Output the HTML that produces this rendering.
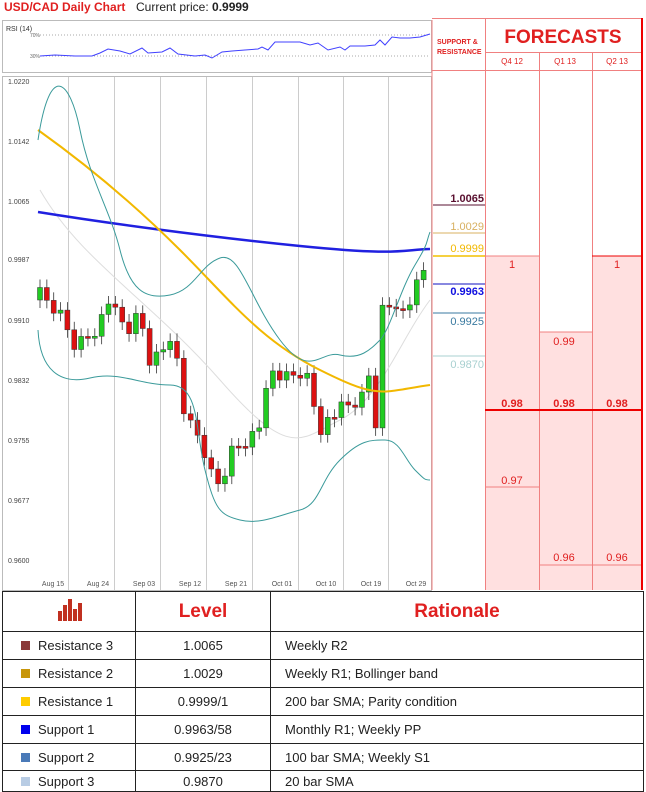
<!DOCTYPE html>
<html><head><meta charset="utf-8"><style>
*{margin:0;padding:0;box-sizing:border-box}
body{width:646px;height:791px;background:#fff;font-family:"Liberation Sans",sans-serif;position:relative;overflow:hidden}
.a{position:absolute;white-space:nowrap}
table{border-collapse:collapse;position:absolute;left:2px;top:591px;width:642px}
td{border:1px solid #222;font-size:13px;color:#222;white-space:nowrap}
</style></head><body>
<svg class="a" style="left:0;top:0" width="646" height="591" id="s">
<rect x="2.5" y="20.5" width="429" height="52" fill="#fff" stroke="#bbb"/>
<text x="6" y="31" font-size="7" fill="#333">RSI (14)</text>
<text x="30" y="37" font-size="5" fill="#666">70%</text><text x="30" y="58" font-size="5" fill="#666">30%</text>
<line x1="40" y1="35" x2="430" y2="35" stroke="#555" stroke-dasharray="1,2" stroke-width=".6"/>
<line x1="40" y1="56" x2="430" y2="56" stroke="#555" stroke-dasharray="1,2" stroke-width=".6"/>
<polyline fill="none" stroke="#4040ff" stroke-width="1" points="40,56 55,55 75,56 92,56 100,53 108,49 120,51 130,54 142,48 148,53 162,52 170,48 178,54 195,56 205,55 212,58 222,52 232,51 245,50 258,49 262,47 268,50 275,42 300,42 310,45 318,43 328,50 340,47 345,50 350,46 365,46 375,45 380,40 385,45 392,37 400,38 410,38 420,37 430,34"/>
<g id="grid"></g>
<g font-size="8" fill="#555" id="pl"></g>
<path d="M40,190 C80,260 150,300 220,380 S300,440 340,420 S400,340 430,300" fill="none" stroke="#ddd" stroke-width="1"/>
<g id="c"></g>
<path d="M38,212 C100,222 200,236 300,246 S400,250 430,249" fill="none" stroke="#2020e0" stroke-width="2.5"/>
<path d="M38,130 C80,160 130,200 180,250 S260,340 320,370 S380,392 430,385" fill="none" stroke="#f2b800" stroke-width="2"/>
<path d="M38,140 C50,60 70,80 80,130 S110,210 120,250 S145,300 170,295 S200,265 220,258 S250,300 280,340 S320,350 340,355 S370,350 380,340 S400,290 415,265 S425,245 430,232" fill="none" stroke="#3a9a9a" stroke-width="1"/>
<path d="M38,330 C40,370 60,385 90,378 S140,385 170,385 S195,430 205,470 S220,515 240,520 S280,515 300,510 S320,480 340,460 S370,440 385,440 S405,460 415,470 S425,480 430,480" fill="none" stroke="#3a9a9a" stroke-width="1"/>
<line x1="432" y1="20" x2="432" y2="590" stroke="#f08080"/>
<rect x="485" y="256" width="54" height="334" fill="#ffe0e0"/>
<rect x="539" y="332" width="53" height="258" fill="#ffe0e0"/>
<rect x="592" y="256" width="50" height="334" fill="#ffe0e0"/>
<g stroke="#f08080" stroke-width="1">
<line x1="432" y1="18.5" x2="642" y2="18.5"/><line x1="485" y1="52.5" x2="642" y2="52.5"/><line x1="432" y1="70.5" x2="642" y2="70.5"/>
<line x1="485.5" y1="18" x2="485.5" y2="590"/><line x1="539.5" y1="52" x2="539.5" y2="590"/><line x1="592.5" y1="52" x2="592.5" y2="590"/>
<line x1="485" y1="256" x2="539" y2="256"/><line x1="539" y1="332" x2="592" y2="332"/>
<line x1="485" y1="487" x2="539" y2="487"/><line x1="539" y1="565" x2="642" y2="565"/>
</g>
<line x1="642" y1="18" x2="642" y2="590" stroke="#e00" stroke-width="2"/>
<line x1="592" y1="256" x2="642" y2="256" stroke="#e00" stroke-width="1"/>
<line x1="485" y1="410" x2="642" y2="410" stroke="#e00" stroke-width="2"/>
<text x="563" y="43" font-size="19" font-weight="bold" fill="#e02020" text-anchor="middle" font-family="Liberation Sans">FORECASTS</text>
<text x="437" y="44" font-size="7" font-weight="bold" fill="#e02020">SUPPORT &amp;</text>
<text x="437" y="54" font-size="7" font-weight="bold" fill="#e02020">RESISTANCE</text>
<g font-size="8" fill="#e02020" text-anchor="middle"><text x="512" y="64">Q4 12</text><text x="565" y="64">Q1 13</text><text x="617" y="64">Q2 13</text></g>
<g font-size="11" font-weight="bold" text-anchor="end">
<text x="484" y="202" fill="#5a1030">1.0065</text><line x1="433" y1="205" x2="485" y2="205" stroke="#5a1030"/>
<text x="484" y="230" fill="#d8b060" font-weight="normal">1.0029</text><line x1="433" y1="233" x2="485" y2="233" stroke="#d8b060"/>
<text x="484" y="252" fill="#f2b800" font-weight="normal">0.9999</text><line x1="433" y1="256" x2="485" y2="256" stroke="#f2c000" stroke-width="1.5"/>
<text x="484" y="295" fill="#1010e0">0.9963</text><line x1="433" y1="284" x2="485" y2="284" stroke="#1010c0"/>
<text x="484" y="325" fill="#3a7aa0" font-weight="normal">0.9925</text><line x1="433" y1="313" x2="485" y2="313" stroke="#3a7aa0"/>
<text x="484" y="368" fill="#a8d0d0" font-weight="normal">0.9870</text><line x1="433" y1="356" x2="485" y2="356" stroke="#a8d0d0"/>
</g>
<g font-size="11" fill="#e02020" text-anchor="middle">
<text x="512" y="268">1</text><text x="617" y="268">1</text><text x="564" y="345">0.99</text>
<text x="512" y="407" font-weight="bold">0.98</text><text x="564" y="407" font-weight="bold">0.98</text><text x="617" y="407" font-weight="bold">0.98</text>
<text x="512" y="484">0.97</text><text x="564" y="561">0.96</text><text x="617" y="561">0.96</text>
</g>
</svg>
<div class="a" style="left:4px;top:0;font-size:12px;color:#e02020;font-weight:bold">USD/CAD Daily Chart</div>
<div class="a" style="left:136px;top:0;font-size:12px;color:#222">Current price: <b>0.9999</b></div>
<table>
<tr style="height:40px"><td style="width:133px;text-align:center"><svg width="26" height="22"><g fill="#c03020"><rect x="2" y="12" width="4" height="10"/><rect x="7" y="6" width="4" height="16"/><rect x="12" y="0" width="4" height="22"/><rect x="17" y="10" width="4" height="12"/><rect x="22" y="4" width="4" height="18"/></g></svg></td>
<td style="width:135px;text-align:center;color:#e02020;font-weight:bold;font-size:19px">Level</td>
<td style="text-align:center;color:#e02020;font-weight:bold;font-size:19px">Rationale</td></tr>
<tr style="height:28px"><td style="padding-left:18px"><span style="display:inline-block;width:9px;height:9px;background:#8b3a3a;margin-right:8px"></span>Resistance 3</td><td style="text-align:center">1.0065</td><td style="padding-left:14px">Weekly R2</td></tr>
<tr style="height:28px"><td style="padding-left:18px"><span style="display:inline-block;width:9px;height:9px;background:#c8960a;margin-right:8px"></span>Resistance 2</td><td style="text-align:center">1.0029</td><td style="padding-left:14px">Weekly R1; Bollinger band</td></tr>
<tr style="height:28px"><td style="padding-left:18px"><span style="display:inline-block;width:9px;height:9px;background:#ffcc00;margin-right:8px"></span>Resistance 1</td><td style="text-align:center">0.9999/1</td><td style="padding-left:14px">200 bar SMA; Parity condition</td></tr>
<tr style="height:28px"><td style="padding-left:18px"><span style="display:inline-block;width:9px;height:9px;background:#0000ee;margin-right:8px"></span>Support 1</td><td style="text-align:center">0.9963/58</td><td style="padding-left:14px">Monthly R1; Weekly PP</td></tr>
<tr style="height:27px"><td style="padding-left:18px"><span style="display:inline-block;width:9px;height:9px;background:#4a7ab8;margin-right:8px"></span>Support 2</td><td style="text-align:center">0.9925/23</td><td style="padding-left:14px">100 bar SMA; Weekly S1</td></tr>
<tr style="height:21px"><td style="padding-left:18px"><span style="display:inline-block;width:9px;height:9px;background:#b8cce4;margin-right:8px"></span>Support 3</td><td style="text-align:center">0.9870</td><td style="padding-left:14px">20 bar SMA</td></tr>
</table>
<script>
(function(){
var ns="http://www.w3.org/2000/svg";
function el(t,a,p){var e=document.createElementNS(ns,t);for(var k in a)e.setAttribute(k,a[k]);document.getElementById(p).appendChild(e);return e;}
el("rect",{x:2.5,y:76.5,width:429,height:514,fill:"none",stroke:"#bbb"},"grid");
var gx=[68,114,160,206,252,298,343,388];
gx.forEach(function(x){el("line",{x1:x+.5,y1:77,x2:x+.5,y2:590,stroke:"#ccc"},"grid");});
var lab=["Aug 15","Aug 24","Sep 03","Sep 12","Sep 21","Oct 01","Oct 10","Oct 19","Oct 29"];
var lx=[53,98,144,190,236,282,326,371,416];
lab.forEach(function(t,i){var e=el("text",{x:lx[i],y:586,"font-size":7,fill:"#555","text-anchor":"middle"},"pl");e.textContent=t;});
var pr=[["1.0220",84],["1.0142",144],["1.0065",204],["0.9987",262],["0.9910",323],["0.9832",383],["0.9755",443],["0.9677",503],["0.9600",563]];
pr.forEach(function(p){var e=el("text",{x:8,y:p[1],"font-size":7,fill:"#444"},"pl");e.textContent=p[0];});
var pts=[[40,295],[60,315],[75,345],[90,335],[100,322],[108,300],[118,320],[130,330],[140,312],[148,360],[160,355],[172,330],[180,380],[185,420],[200,440],[210,470],[215,490],[225,470],[232,450],[245,440],[258,430],[265,400],[272,372],[285,378],[292,376],[300,372],[310,380],[318,430],[328,420],[340,410],[352,405],[362,398],[370,372],[376,425],[382,310],[390,305],[398,300],[405,318],[412,295],[420,282],[426,265],[430,258]];
var prev=300;
for(var i=0;i<57;i++){var x=40+i*6.85;var j=0;while(j<pts.length-2&&pts[j+1][0]<x)j++;var a=pts[j],b=pts[j+1];var t=Math.max(0,Math.min(1,(x-a[0])/(b[0]-a[0])));var y=a[1]+(b[1]-a[1])*t+((i*37)%11-5)*1.5;var up=y<prev;var tp=Math.min(y,prev),bt=Math.max(y,prev);if(bt-tp<2)bt=tp+2;
el("line",{x1:x,y1:tp-8,x2:x,y2:bt+8,stroke:"#333","stroke-width":.8},"c");
el("rect",{x:x-2.5,y:tp,width:5,height:bt-tp,fill:up?"#22cc22":"#dd1111",stroke:"#333","stroke-width":.5},"c");prev=y;}
})();
</script>
</body></html>
